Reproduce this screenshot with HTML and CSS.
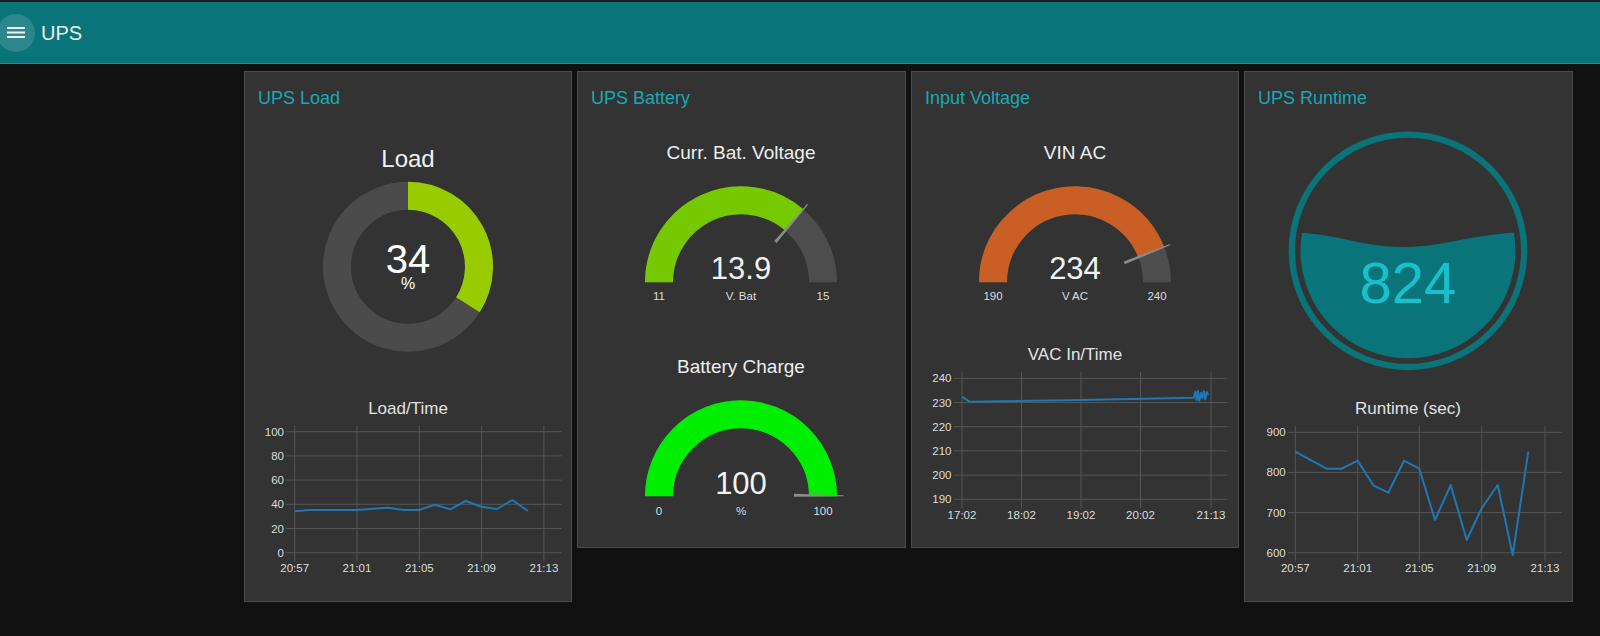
FILE: index.html
```html
<!DOCTYPE html>
<html lang="en">
<head>
<meta charset="utf-8">
<title>UPS</title>
<link rel="stylesheet" href="styles.css">
</head>
<body>
<header class="topbar">
  <button class="menu-btn" aria-label="menu">
    <svg class="menu-icon" width="18" height="11" viewBox="0 0 18 11"><rect y="0" width="18" height="2"/><rect y="4.5" width="18" height="2"/><rect y="9" width="18" height="2"/></svg>
  </button>
  <span class="app-title">UPS</span>
</header>

<main class="board">
  <!-- UPS Load -->
  <section class="card">
    <h2 class="card-title">UPS Load</h2>
    <svg class="widget" width="326" height="260" viewBox="0 0 326 260">
      <text class="t-gtitle-lg" x="163" y="51">Load</text>
      <circle class="donut-bg" cx="163" cy="150.7" r="71"/>
      <path class="donut-val" d="M163 79.7 A71 71 0 0 1 222.95 188.74"/>
      <text class="t-donut-num" x="163" y="157">34</text>
      <text class="t-donut-unit" x="163" y="173">%</text>
    </svg>
    <svg class="widget" width="326" height="222" viewBox="0 0 326 222">
      <text class="t-ctitle" x="163" y="38">Load/Time</text>
      <g class="grid">
        <line x1="40.7" y1="55.7" x2="316.3" y2="55.7"/>
        <line x1="40.7" y1="79.9" x2="316.3" y2="79.9"/>
        <line x1="40.7" y1="104.1" x2="316.3" y2="104.1"/>
        <line x1="40.7" y1="128.3" x2="316.3" y2="128.3"/>
        <line x1="40.7" y1="152.5" x2="316.3" y2="152.5"/>
        <line x1="40.7" y1="176.7" x2="316.3" y2="176.7"/>
        <line x1="49.7" y1="49.7" x2="49.7" y2="185.7"/>
        <line x1="112" y1="49.7" x2="112" y2="185.7"/>
        <line x1="174.3" y1="49.7" x2="174.3" y2="185.7"/>
        <line x1="236.6" y1="49.7" x2="236.6" y2="185.7"/>
        <line x1="298.9" y1="49.7" x2="298.9" y2="185.7"/>
      </g>
      <g class="t-axis t-axis-y">
        <text x="39" y="59.7">100</text>
        <text x="39" y="83.9">80</text>
        <text x="39" y="108.1">60</text>
        <text x="39" y="132.3">40</text>
        <text x="39" y="156.5">20</text>
        <text x="39" y="180.7">0</text>
      </g>
      <g class="t-axis t-axis-x">
        <text x="49.7" y="196">20:57</text>
        <text x="112" y="196">21:01</text>
        <text x="174.3" y="196">21:05</text>
        <text x="236.6" y="196">21:09</text>
        <text x="298.9" y="196">21:13</text>
      </g>
      <polyline class="series" points="49.7,135.3 64.7,134 79.7,134 96.3,134 112,134 128,132.7 143,131.7 158.7,134 174,134 189.7,128.7 205.3,133.3 220.7,125 236.3,130.7 252,133 267.3,124 283,135"/>
    </svg>
  </section>

  <!-- UPS Battery -->
  <section class="card">
    <h2 class="card-title">UPS Battery</h2>
    <svg class="widget" width="326" height="214" viewBox="0 0 326 214">
      <text class="t-gtitle" x="163" y="43">Curr. Bat. Voltage</text>
      <path class="arc-bg" d="M81 166.3 A82 82 0 0 1 245 166.3"/>
      <path class="arc-val arc-lime" d="M81 166.3 A82 82 0 0 1 216.25 103.95"/>
      <polygon class="needle" points="198.56,126.97 196.28,125.03 229.10,87.97 230.02,88.75"/>
      <text class="t-gval" x="163" y="163.3">13.9</text>
      <text class="t-gsmall" x="163" y="184">V. Bat</text>
      <text class="t-gsmall" x="81" y="184">11</text>
      <text class="t-gsmall" x="245" y="184">15</text>
    </svg>
    <svg class="widget" width="326" height="214" viewBox="0 0 326 214">
      <text class="t-gtitle" x="163" y="43">Battery Charge</text>
      <path class="arc-bg" d="M81 166.3 A82 82 0 0 1 245 166.3"/>
      <path class="arc-val arc-green" d="M81 166.3 A82 82 0 0 1 245 166.3"/>
      <polygon class="needle" points="216,166.8 216,163.8 265.5,165.3 265.5,166.3"/>
      <text class="t-gval" x="163" y="164">100</text>
      <text class="t-gsmall" x="163" y="185">%</text>
      <text class="t-gsmall" x="81" y="185">0</text>
      <text class="t-gsmall" x="245" y="185">100</text>
    </svg>
  </section>

  <!-- Input Voltage -->
  <section class="card">
    <h2 class="card-title">Input Voltage</h2>
    <svg class="widget" width="326" height="214" viewBox="0 0 326 214">
      <text class="t-gtitle" x="163" y="43">VIN AC</text>
      <path class="arc-bg" d="M81 166.3 A82 82 0 0 1 245 166.3"/>
      <path class="arc-val arc-orange" d="M81 166.3 A82 82 0 0 1 239.24 136.12"/>
      <polygon class="needle" points="212.83,148.18 211.73,145.40 258.12,128.11 258.48,129.03"/>
      <text class="t-gval" x="163" y="163.3">234</text>
      <text class="t-gsmall" x="163" y="184">V AC</text>
      <text class="t-gsmall" x="81" y="184">190</text>
      <text class="t-gsmall" x="245" y="184">240</text>
    </svg>
    <svg class="widget" width="326" height="214" viewBox="0 0 326 214">
      <text class="t-ctitle" x="163" y="30">VAC In/Time</text>
      <g class="grid">
        <line x1="41.7" y1="48.3" x2="315.5" y2="48.3"/>
        <line x1="41.7" y1="72.5" x2="315.5" y2="72.5"/>
        <line x1="41.7" y1="96.7" x2="315.5" y2="96.7"/>
        <line x1="41.7" y1="120.9" x2="315.5" y2="120.9"/>
        <line x1="41.7" y1="145.1" x2="315.5" y2="145.1"/>
        <line x1="41.7" y1="169.3" x2="315.5" y2="169.3"/>
        <line x1="50" y1="41.7" x2="50" y2="178.3"/>
        <line x1="109.5" y1="41.7" x2="109.5" y2="178.3"/>
        <line x1="169" y1="41.7" x2="169" y2="178.3"/>
        <line x1="228.5" y1="41.7" x2="228.5" y2="178.3"/>
        <line x1="299" y1="41.7" x2="299" y2="178.3"/>
      </g>
      <g class="t-axis t-axis-y">
        <text x="39.5" y="52.3">240</text>
        <text x="39.5" y="76.5">230</text>
        <text x="39.5" y="100.7">220</text>
        <text x="39.5" y="124.9">210</text>
        <text x="39.5" y="149.1">200</text>
        <text x="39.5" y="173.3">190</text>
      </g>
      <g class="t-axis t-axis-x">
        <text x="50" y="189">17:02</text>
        <text x="109.5" y="189">18:02</text>
        <text x="169" y="189">19:02</text>
        <text x="228.5" y="189">20:02</text>
        <text x="299" y="189">21:13</text>
      </g>
      <polyline class="series" points="50,66.7 57.3,71.7 169.3,70 281.7,67.7 283.3,61.7 284.7,70 286,61 287.3,70.7 289,62.7 290.3,68.3 292,61.3 293.3,69.3 295,62 296,65"/>
    </svg>
  </section>

  <!-- UPS Runtime -->
  <section class="card">
    <h2 class="card-title">UPS Runtime</h2>
    <svg class="widget" width="326" height="260" viewBox="0 0 326 260">
      <defs>
        <clipPath id="liquid-clip"><circle cx="163" cy="134.8" r="107.5"/></clipPath>
      </defs>
      <circle class="liquid-ring" cx="163" cy="134.8" r="116.2"/>
      <path class="liquid-fill" clip-path="url(#liquid-clip)" d="M45 116.5 C90 116.5 115 131 157 131 C200 131 228 117.5 281 116 L281 260 L45 260 Z"/>
      <text class="t-liquid" x="163" y="186.7">824</text>
    </svg>
    <svg class="widget" width="326" height="222" viewBox="0 0 326 222">
      <text class="t-ctitle" x="163" y="38">Runtime (sec)</text>
      <g class="grid">
        <line x1="42.7" y1="56.3" x2="316.7" y2="56.3"/>
        <line x1="42.7" y1="96.4" x2="316.7" y2="96.4"/>
        <line x1="42.7" y1="136.6" x2="316.7" y2="136.6"/>
        <line x1="42.7" y1="176.7" x2="316.7" y2="176.7"/>
        <line x1="50.3" y1="49.7" x2="50.3" y2="185.7"/>
        <line x1="112.7" y1="49.7" x2="112.7" y2="185.7"/>
        <line x1="174.3" y1="49.7" x2="174.3" y2="185.7"/>
        <line x1="236.7" y1="49.7" x2="236.7" y2="185.7"/>
        <line x1="300" y1="49.7" x2="300" y2="185.7"/>
      </g>
      <g class="t-axis t-axis-y">
        <text x="40.7" y="60.3">900</text>
        <text x="40.7" y="100.4">800</text>
        <text x="40.7" y="140.6">700</text>
        <text x="40.7" y="180.7">600</text>
      </g>
      <g class="t-axis t-axis-x">
        <text x="50.3" y="196">20:57</text>
        <text x="112.7" y="196">21:01</text>
        <text x="174.3" y="196">21:05</text>
        <text x="236.7" y="196">21:09</text>
        <text x="300" y="196">21:13</text>
      </g>
      <polyline class="series" points="50.3,75.7 66.7,84.7 81.7,92.7 96.7,92.7 112.7,84.7 128.3,109.3 143.3,116.7 159,84.7 174.3,92.7 190,144 205.7,109 221.7,164 236.7,132.3 252.7,109 267.7,179 283.3,75.7"/>
    </svg>
  </section>
</main>
</body>
</html>
```

FILE: styles.css
```css
* {
  box-sizing: border-box;
}

html, body {
  margin: 0;
  padding: 0;
}

body {
  background: #111111;
  font-family: "Liberation Sans", Arial, sans-serif;
  height: 636px;
  overflow: hidden;
}

/* ---------- top bar ---------- */
.topbar {
  height: 64px;
  background: #097479;
  border-top: 2px solid #1d1d1d;
  border-bottom: 1px solid #6f6f6f;
  display: flex;
  align-items: center;
}

.menu-btn {
  width: 38px;
  height: 38px;
  margin-left: -3px;
  padding: 0;
  border: 0;
  border-radius: 50%;
  background: #2b878b;
  display: flex;
  align-items: center;
  justify-content: center;
}

.menu-icon {
  display: block;
  fill: #eef4f4;
}

.app-title {
  margin-left: 6px;
  font-size: 20px;
  line-height: 24px;
  color: #eeeeee;
}

/* ---------- board ---------- */
.board {
  display: grid;
  grid-template-columns: 328px 329px 328px 329px;
  column-gap: 5px;
  align-items: start;
  padding: 7px 0 0 244px;
}

.card {
  background: #333333;
  border: 1px solid #4b4b4b;
  padding-bottom: 3px;
}

.card-title {
  margin: 0;
  padding: 14px 12px 6px 13px;
  font-size: 18px;
  line-height: 24px;
  font-weight: normal;
  color: #17a9b4;
}

.widget {
  display: block;
}

/* ---------- svg text ---------- */
.widget text {
  font-family: "Liberation Sans", Arial, sans-serif;
  text-anchor: middle;
}

.t-gtitle-lg {
  font-size: 24px;
  fill: #f2f2f2;
}

.t-gtitle {
  font-size: 19px;
  fill: #eeeeee;
}

.t-donut-num {
  font-size: 40px;
  fill: #ffffff;
}

.t-donut-unit {
  font-size: 16px;
  fill: #ffffff;
}

.t-gval {
  font-size: 31px;
  fill: #f2f2f2;
}

.t-gsmall {
  font-size: 11.5px;
  fill: #dddddd;
}

.t-ctitle {
  font-size: 17px;
  fill: #e2e2e2;
}

.t-axis text {
  font-size: 11.5px;
  fill: #dddddd;
}

.widget .t-axis-y text {
  text-anchor: end;
}

.t-liquid {
  font-size: 58px;
  fill: #17c0cb;
}

/* ---------- gauges ---------- */
.donut-bg {
  fill: none;
  stroke: #4b4b4b;
  stroke-width: 28;
}

.donut-val {
  fill: none;
  stroke: #99cc00;
  stroke-width: 28;
}

.arc-bg {
  fill: none;
  stroke: #4d4d4d;
  stroke-width: 28;
}

.arc-val {
  fill: none;
  stroke-width: 28;
}

.arc-lime {
  stroke: #76c800;
}

.arc-green {
  stroke: #00ee00;
}

.arc-orange {
  stroke: #c95f24;
}

.needle {
  fill: #8c8c8c;
}

.liquid-ring {
  fill: none;
  stroke: #097479;
  stroke-width: 6.3;
}

.liquid-fill {
  fill: #097479;
}

/* ---------- charts ---------- */
.grid line {
  stroke: #555555;
  stroke-width: 1;
}

.series {
  fill: none;
  stroke: #1f77b4;
  stroke-width: 2;
  stroke-linejoin: round;
}
```
